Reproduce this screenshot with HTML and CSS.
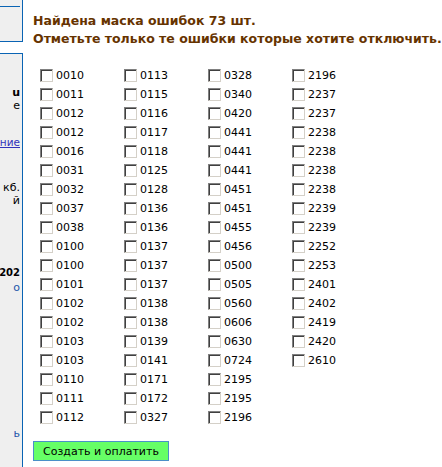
FILE: index.html
```html
<!DOCTYPE html>
<html lang="ru">
<head>
<meta charset="utf-8">
<title>Маска ошибок</title>
<link rel="stylesheet" href="styles.css">
</head>
<body>
<div class="page">
  <aside class="sidebar">
    <div class="side-box side-top"><div class="side-rule"></div></div>
    <div class="side-box side-main">
      <div class="frag bold f1">u</div>
      <div class="frag f2">е</div>
      <div class="frag link f3">ние</div>
      <div class="frag f4">кб.</div>
      <div class="frag f5">й</div>
      <div class="frag bold f6">202</div>
      <div class="frag blue f7">о</div>
      <div class="frag blue f8">ь</div>
    </div>
  </aside>
  <main class="content">
    <h1 class="title">Найдена маска ошибок 73 шт.<br>Отметьте только те ошибки которые хотите отключить.</h1>
    <form class="codes" id="codes"></form>
    <button class="submit" type="button">Создать и оплатить</button>
  </main>
</div>
<script src="app.js"></script>
</body>
</html>
```
FILE: app.js
```js
var codes = [
"0010","0011","0012","0012","0016","0031","0032","0037","0038","0100","0100","0101","0102","0102","0103","0103","0110","0111","0112",
"0113","0115","0116","0117","0118","0125","0128","0136","0136","0137","0137","0137","0138","0138","0139","0141","0171","0172","0327",
"0328","0340","0420","0441","0441","0441","0451","0451","0455","0456","0500","0505","0560","0606","0630","0724","2195","2195","2196",
"2196","2237","2237","2238","2238","2238","2238","2239","2239","2252","2253","2401","2402","2419","2420","2610"
];
var form = document.getElementById("codes");
codes.forEach(function (c, i) {
  var l = document.createElement("label");
  l.className = "code";
  var cb = document.createElement("input");
  cb.type = "checkbox";
  cb.className = "box";
  cb.name = "e" + i;
  cb.value = c;
  l.appendChild(cb);
  var s = document.createElement("span");
  s.textContent = c;
  l.appendChild(s);
  form.appendChild(l);
});
```
FILE: styles.css
```css
html, body {
  margin: 0;
  padding: 0;
  background: #ffffff;
}
body {
  font-family: "DejaVu Sans", Verdana, sans-serif;
  font-size: 11px;
  color: #000;
}
.page {
  display: flex;
  min-height: 467px;
}
.sidebar {
  width: 23px;
  flex: none;
  display: flex;
  flex-direction: column;
  gap: 11px;
}
.side-box {
  background: #efefef;
  border-right: 1px solid #0a64b4;
  box-sizing: border-box;
}
.side-top {
  height: 42px;
  border-bottom: 1px solid #0a64b4;
  padding-top: 6px;
}
.side-rule {
  height: 1px;
  width: 20px;
  background: #0a64b4;
}
.side-main {
  flex: 1;
  border-top: 1px solid #0a64b4;
  position: relative;
}
.frag {
  position: absolute;
  right: 2px;
  white-space: nowrap;
  font-size: 11px;
  line-height: 13px;
}
.frag.bold { font-weight: bold; }
.frag.link { color: #3333bb; text-decoration: underline; font-size: 10.5px; }
.frag.blue { color: #2255aa; }
.f1 { top: 32px; }
.f2 { top: 45px; }
.f3 { top: 82px; }
.f4 { top: 127px; }
.f5 { top: 140px; }
.f6 { top: 212px; font-size: 10px; }
.f7 { top: 227px; }
.f8 { top: 373px; }
.content {
  flex: 1;
  min-width: 0;
  padding: 12px 0 0 10px;
}
.title {
  margin: 0;
  font-size: 12.5px;
  line-height: 18px;
  font-weight: bold;
  color: #663300;
  white-space: nowrap;
}
.codes {
  margin: 18px 0 0 7px;
  display: grid;
  grid-auto-flow: column;
  grid-template-rows: repeat(19, 19px);
  grid-template-columns: repeat(4, 84px);
}
.code {
  display: flex;
  align-items: center;
  gap: 3px;
}
.box {
  -webkit-appearance: none;
  appearance: none;
  margin: 0;
  width: 13px;
  height: 13px;
  box-sizing: border-box;
  background: #fff;
  border: 1px solid;
  border-color: #808080 #d4d0c8 #d4d0c8 #808080;
  box-shadow: inset 1px 1px 0 #404040;
}
.submit {
  margin-top: 14px;
  display: block;
  width: 136px;
  height: 20px;
  padding: 0;
  background: #66ff66;
  border: 1px solid #4a90c8;
  font-family: "DejaVu Sans", Verdana, sans-serif;
  font-size: 11px;
  color: #000;
}
```
